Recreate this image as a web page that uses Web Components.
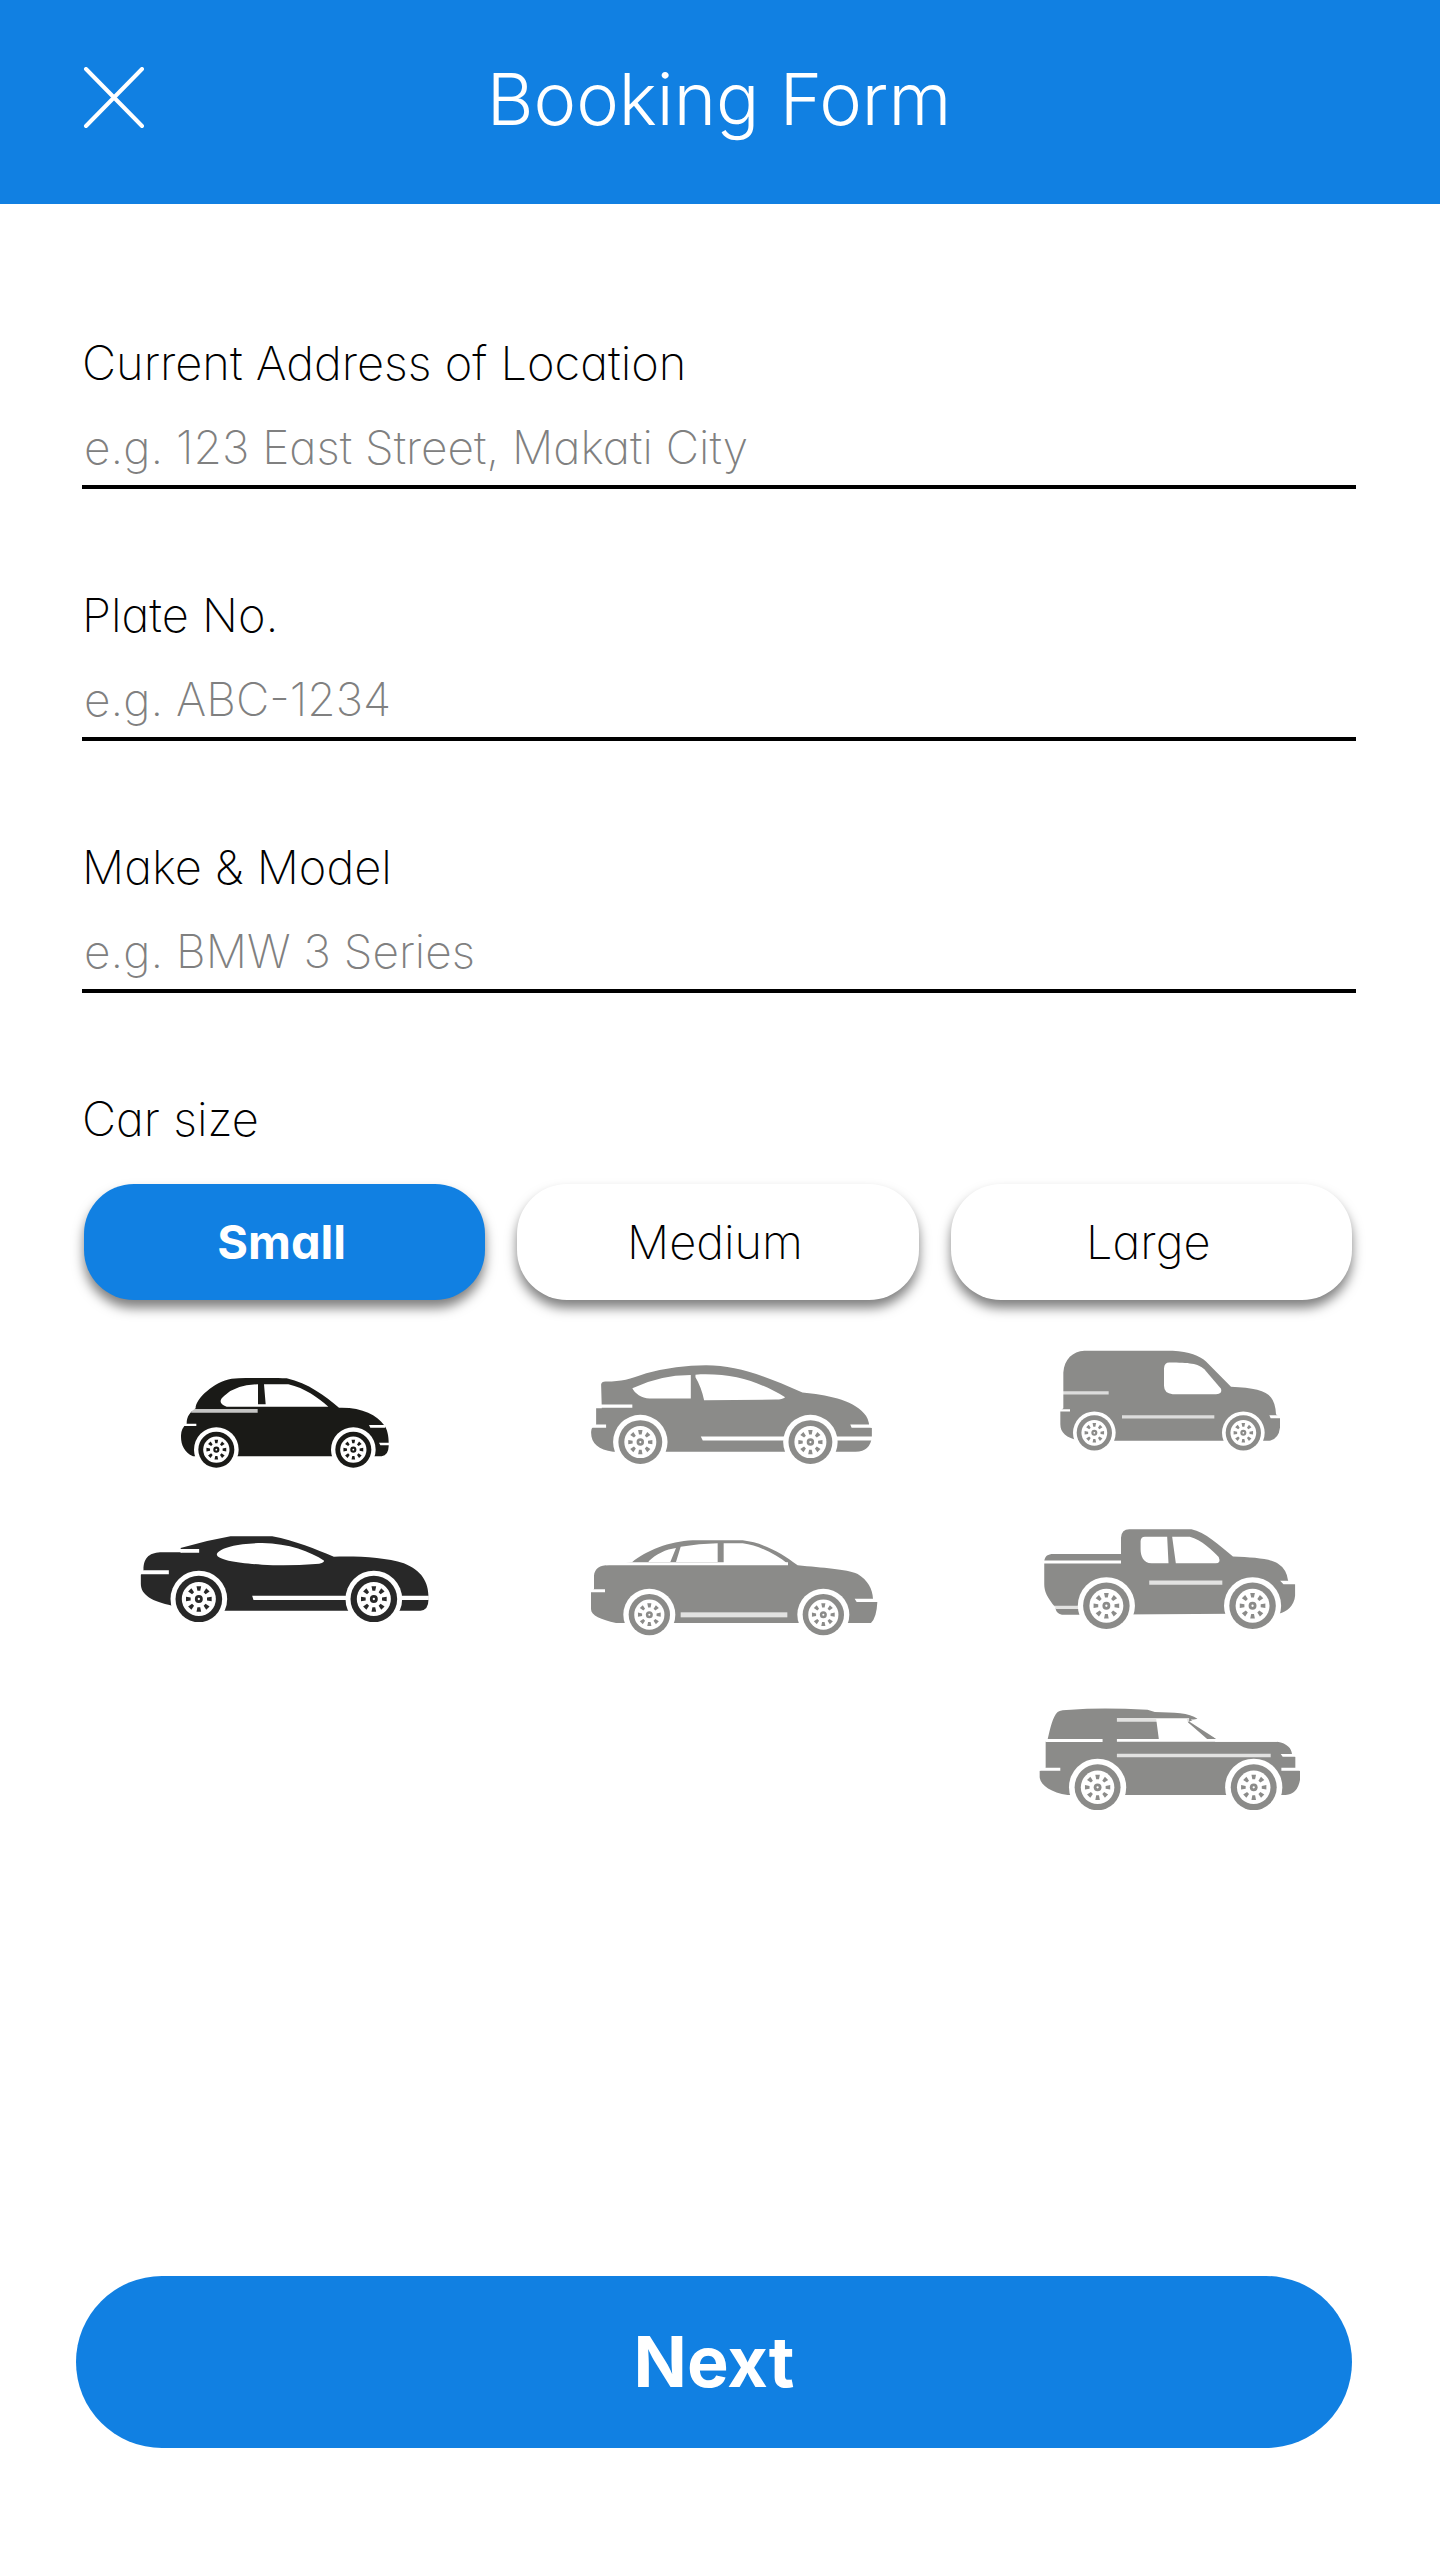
<!DOCTYPE html>
<html lang="en">
<head>
<meta charset="utf-8">
<meta name="viewport" content="width=device-width, initial-scale=1">
<title>Booking Form</title>
<style>
  :root { --blue: #1180e2; --ink: #000; --hint: #808080; }
  body {
    margin: 0;
    background: #fff;
    color: var(--ink);
    font-family: Inter, "Open Sans", sans-serif;
    font-weight: 200;
    font-size: 47px;
    line-height: 58px;
    font-feature-settings: "cv11";
  }
</style>
</head>
<body>
<booking-page>
  <app-header slot="header">Booking Form</app-header>
  <text-field label="Current Address of Location" hint="e.g. 123 East Street, Makati City"></text-field>
  <text-field label="Plate No." hint="e.g. ABC-1234"></text-field>
  <text-field label="Make &amp; Model" hint="e.g. BMW 3 Series"></text-field>
  <size-picker label="Car size">
    <size-option selected>Small</size-option>
    <size-option>Medium</size-option>
    <size-option>Large</size-option>
  </size-picker>
  <car-gallery slot="gallery">
    <car-column class="small">
      <car-icon kind="mini"></car-icon>
      <car-icon kind="coupe"></car-icon>
    </car-column>
    <car-column class="medium">
      <car-icon kind="hatchback"></car-icon>
      <car-icon kind="sedan"></car-icon>
    </car-column>
    <car-column class="large">
      <car-icon kind="van"></car-icon>
      <car-icon kind="pickup"></car-icon>
      <car-icon kind="suv"></car-icon>
    </car-column>
  </car-gallery>
  <primary-button slot="action">Next</primary-button>
</booking-page>

<script>
const component = (name, render) => customElements.define(name, class extends HTMLElement {
  constructor() {
    super();
    this.attachShadow({ mode: "open" });
  }
  connectedCallback() {
    this.shadowRoot.innerHTML = render(this);
  }
});

component("booking-page", () => `
  <style>
    :host { display: flex; flex-direction: column; min-height: 100vh; }
    .fields { display: flex; flex-direction: column; gap: 97px; padding: 130px 84px 0 82px; }
    .gallery { padding: 50px 140px 0; }
    footer { margin-top: auto; padding: 80px 88px 112px 76px; }
  </style>
  <slot name="header"></slot>
  <main>
    <div class="fields"><slot></slot></div>
    <div class="gallery"><slot name="gallery"></slot></div>
  </main>
  <footer><slot name="action"></slot></footer>`);

component("app-header", () => `
  <style>
    :host { display: block; background: var(--blue); color: #fff; }
    header { display: grid; grid-template-columns: 64px 1fr 64px; align-items: center; height: 204px; padding: 0 84px 6px 82px; box-sizing: border-box; }
    button { display: flex; width: 64px; height: 64px; padding: 0; border: 0; background: none; color: inherit; cursor: pointer; }
    h1 { margin: 0; font-size: 72px; line-height: 84px; font-weight: 300; text-align: center; }
  </style>
  <header>
    <button type="button" aria-label="Close">
      <svg width="64" height="64" viewBox="0 0 64 64" fill="none" stroke="currentColor" stroke-width="4" stroke-linecap="round"><path d="M4 2 60 59M60 2 4 59"/></svg>
    </button>
    <h1><slot></slot></h1>
  </header>`);

component("text-field", el => `
  <style>
    :host { display: block; }
    label { display: block; margin-bottom: 26px; }
    input {
      display: block; width: 100%; box-sizing: border-box; height: 71px;
      margin: 0; padding: 0 0 10px 2px; border: 0; border-bottom: 4px solid #000; border-radius: 0;
      background: none; color: inherit; font: inherit; font-size: 46px; font-feature-settings: "cv11"; outline: none;
    }
    input::placeholder { color: var(--hint); opacity: 1; }
  </style>
  <label for="box">${el.getAttribute("label").replace("&", "&amp;")}</label>
  <input id="box" type="text" placeholder="${el.getAttribute("hint")}">`);

component("size-picker", el => `
  <style>
    :host { display: block; }
    .label { margin-bottom: 36px; }
    .options { display: flex; gap: 32px; padding: 0 4px 0 2px; }
  </style>
  <div class="label" id="label">${el.getAttribute("label")}</div>
  <div class="options" role="group" aria-labelledby="label"><slot></slot></div>`);

component("size-option", el => `
  <style>
    :host { display: block; flex: 1; }
    button {
      display: block; width: 100%; height: 116px; padding: 0 6px 0 0; border: 0; border-radius: 50px;
      background: #fff; color: inherit; font: inherit; font-feature-settings: "cv11";
      box-shadow: 0 8px 12px rgba(0, 0, 0, .5); cursor: pointer;
    }
    button[aria-pressed="true"] { background: var(--blue); color: #fff; font-weight: 700; }
  </style>
  <button type="button" aria-pressed="${el.hasAttribute("selected")}"><slot></slot></button>`);

component("primary-button", () => `
  <style>
    :host { display: block; }
    button {
      display: block; width: 100%; height: 172px; border: 0; border-radius: 86px; padding: 0;
      background: var(--blue); color: #fff; font: inherit; font-feature-settings: "cv11";
      font-size: 70px; line-height: 84px; font-weight: 700; cursor: pointer;
    }
  </style>
  <button type="button"><slot></slot></button>`);

component("car-gallery", () => `
  <style>
    :host { display: flex; justify-content: space-between; align-items: flex-start; }
    ::slotted(.small) { padding-top: 28px; --row-gap: 68px; --car: #1a1a17; }
    ::slotted(.medium) { padding-top: 15px; --row-gap: 76px; --car: #8b8b89; }
    ::slotted(.large) { --row-gap: 78px; --car: #8b8b89; }
  </style>
  <slot></slot>`);

component("car-column", () => `
  <style>
    :host { display: flex; flex-direction: column; align-items: center; gap: var(--row-gap); }
  </style>
  <slot></slot>`);

/* A wheel: white arch, tyre, rim, ring of eight spoke holes and a hub. */
function wheel(x, y, r, arch) {
  let holes = "";
  for (let a = 0; a < 360; a += 45) {
    holes += `<path transform="rotate(${a} ${x} ${y})" d="M${x - r * .1} ${y - r * .55}h${r * .2}l${-r * .04} ${r * .2}h${-r * .12}z"/>`;
  }
  return `<circle cx="${x}" cy="${y}" r="${arch}" fill="#fff"/>
    <circle cx="${x}" cy="${y}" r="${r}"/>
    <circle cx="${x}" cy="${y}" r="${r * .73}" fill="#fff"/>
    ${holes}<circle cx="${x}" cy="${y}" r="${r * .17}"/>
    <circle cx="${x}" cy="${y}" r="${r * .05}" fill="#fff"/>`;
}

const cars = {
  mini: {
    box: [148, 85, 624, 270],
    body: `<path d="M192 176C190 150 245 96 300 87Q380 82 465 86C530 100 580 140 622 174C690 172 735 195 757 226C768 240 772 262 771 290Q770 318 750 320H184C158 308 148 285 148 262Q147 236 165 222C165 200 175 188 192 176Z"/>`,
    cuts: `<path d="M285 171C262 165 262 150 278 138Q315 104 379 104V164H402L397 104H470C520 115 560 145 590 171Z"/><path opacity=".75" d="M184 178H378V189H178Z"/><path d="M160 222H194V229H156ZM712 226H760V234H716ZM742 279H772V287H746Z"/>`,
    wheels: [[254, 300, 54, 67], [665, 300, 54, 67]]
  },
  coupe: {
    box: [34, 558, 866, 258],
    body: `<path d="M155 594Q230 572 305 559H430C500 572 560 598 615 620C690 618 770 622 825 640C880 662 900 698 899 745Q900 780 875 782H290L130 767C70 755 35 735 36 700V674L44 660C44 620 65 607 100 607H160Z"/>`,
    cuts: `<path d="M264 612C275 590 340 580 400 579C480 580 545 605 586 632Q585 641 560 642Q480 648 400 644C330 640 262 630 264 612Z"/><path d="M155 597H211V608H155ZM34 661H120V673H34ZM370 737H900V750H374Z"/>`,
    wheels: [[210, 747, 70, 85], [735, 747, 70, 85]], fill: "#282828"
  },
  hatchback: {
    box: [62, 75, 864, 298],
    body: `<path d="M94 134Q95 124 110 125C155 125 180 118 230 100Q320 76 410 76C500 76 580 105 700 158C770 164 850 180 885 220Q900 235 901 260L909 265V290Q905 335 860 336H130C85 330 62 310 64 275Q65 260 79 255V205H96Z"/>`,
    cuts: `<path d="M188 145Q270 105 364 105V176H240C215 175 195 160 188 145ZM378 104C490 98 570 125 648 172Q640 179 620 179L404 181Q395 140 378 112Z"/><path d="M90 194H188V204H76ZM62 254H109V264H62ZM844 254H910V264H848ZM394 290H910V302H400Z"/>`,
    wheels: [[212, 307, 66, 82], [724, 307, 66, 82]]
  },
  sedan: {
    box: [62, 58, 864, 288],
    body: `<path d="M188 125C230 90 300 62 370 59H520C590 68 640 100 685 134C760 142 830 145 865 160C895 178 910 205 911 235L924 244Q922 290 905 307H140C95 297 65 285 65 265V215L74 205V165C76 145 90 133 120 133Z"/>`,
    cuts: `<path d="M238 122C260 100 290 86 320 82L303 124H238ZM334 78Q390 69 445 68V124H320ZM463 68H520C570 75 620 100 656 130L463 132Z"/><path d="M110 125H656V134H110ZM62 206H107V215H62ZM856 234H926V244H862Z"/><rect x="334" y="275" width="320" height="15" opacity=".75"/>`,
    wheels: [[240, 282, 62, 78], [762, 282, 62, 78]]
  },
  van: {
    box: [92, 58, 660, 302],
    body: `<path d="M102 125C105 85 130 62 165 60H430C480 62 510 75 530 92L605 168C670 170 710 180 725 200Q738 215 740 250L752 262V290Q748 325 720 330H150C110 320 93 305 93 280V240L102 232Z"/>`,
    cuts: `<path d="M420 95C480 95 505 98 525 115L575 174Q580 190 560 190H430Q404 188 404 165V112Q405 95 420 95Z"/><path d="M92 235H122V242H92ZM720 253H752V262H724Z"/><path opacity=".7" d="M100 181H238V191H100ZM278 253H555V263H278Z"/>`,
    wheels: [[195, 306, 53, 64], [642, 306, 53, 64]]
  },
  pickup: {
    box: [40, 54, 758, 304],
    body: `<path d="M42 150C45 135 52 129 70 129H273V80Q275 55 298 55H485C525 62 570 105 610 137C670 140 720 142 745 158Q772 175 776 210L797 220V255C795 285 770 305 750 308L150 312H95Q76 308 76 290C50 260 42 240 42 220Z"/>`,
    cuts: `<path d="M345 77H412L416 157H365C340 157 332 135 332 115V90Q333 77 345 77ZM427 77H480C515 85 550 120 567 138Q575 157 558 157H438Z"/><path d="M40 149H273V158H40ZM752 210H798V220H762Z"/><path opacity=".75" d="M70 285H150V295H78ZM358 209H578V222H358Z"/>`,
    wheels: [[229, 285, 70, 86], [669, 285, 70, 86]]
  },
  suv: {
    box: [24, 54, 784, 306],
    body: `<path d="M50 148C58 115 65 80 80 66Q90 59 120 59Q210 52 350 59L372 66C430 68 475 68 500 86L475 94L558 148L552 155H740C770 160 782 175 784 192L794 200V235L808 242V270Q800 313 765 315H110C60 308 28 285 26 262V242L44 233V155Z"/>`,
    cuts: `<path d="M376 87H468L472 97L530 148H384ZM480 88H520L600 149H560Z"/><path d="M44 147H215V156H44ZM258 147H740V155H258ZM24 233H88V242H24ZM752 233H808V242H752ZM750 192H796V200H756Z"/><path opacity=".75" d="M258 84H475V95H258ZM258 191H720V202H258Z"/>`,
    wheels: [[200, 292, 69, 86], [669, 292, 69, 86]]
  }
};

component("car-icon", el => {
  const kind = el.getAttribute("kind");
  const car = cars[kind];
  const [x, y, w, h] = car.box;
  return `
  <style>
    :host { display: block; }
    svg { display: block; fill: ${car.fill || "var(--car)"}; }
  </style>
  <svg role="img" aria-label="${kind}" width="${Math.round(w / 3)}" height="${Math.round(h / 3)}" viewBox="${x} ${y} ${w} ${h}">
    ${car.body}
    <g fill="#fff">${car.cuts}</g>
    ${car.wheels.map(v => wheel(...v)).join("")}
  </svg>`;
});
</script>
</body>
</html>
